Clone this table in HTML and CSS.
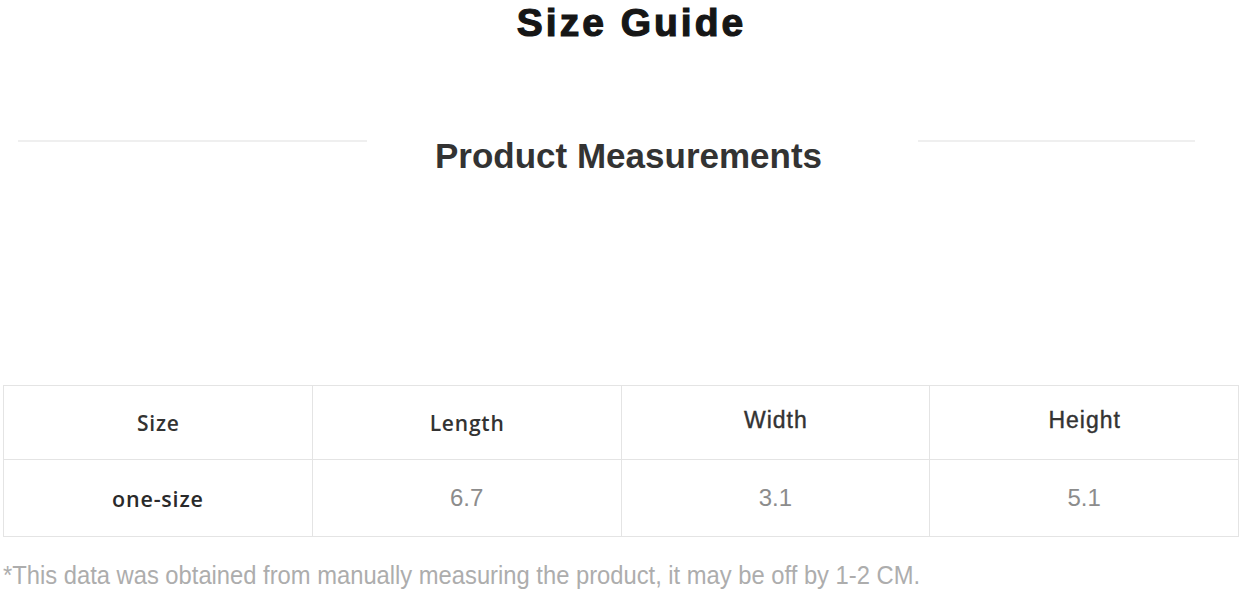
FILE: index.html
```html
<!DOCTYPE html>
<html lang="en">
<head>
<meta charset="utf-8">
<title>Size Guide</title>
<link rel="stylesheet" href="styles.css">
</head>
<body>
<main class="page">
  <h1 class="title">Size Guide</h1>
  <div class="section-head">
    <span class="rule rule-left"></span>
    <h2 class="section-title">Product Measurements</h2>
    <span class="rule rule-right"></span>
  </div>
  <table class="size-table">
    <thead>
      <tr>
        <th>Size</th>
        <th>Length</th>
        <th class="arial">Width</th>
        <th class="arial">Height</th>
      </tr>
    </thead>
    <tbody>
      <tr>
        <td class="size-name">one-size</td>
        <td class="val">6.7</td>
        <td class="val">3.1</td>
        <td class="val">5.1</td>
      </tr>
    </tbody>
  </table>
  <p class="note"><span class="note-text">*This data was obtained from manually measuring the product, it may be off by 1-2 CM.</span></p>
</main>
</body>
</html>
```

FILE: styles.css
```css
html, body {
  margin: 0;
  padding: 0;
  background: #ffffff;
}

.page {
  width: 1242px;
  height: 592px;
  overflow: hidden;
  font-family: "Liberation Sans", Arial, sans-serif;
}

.title {
  margin: 0;
  text-align: center;
  font-size: 39px;
  line-height: 45px;
  font-weight: 700;
  color: #161616;
  letter-spacing: 3px;
  -webkit-text-stroke: 1.2px #161616;
  padding-left: 21px;
}

.section-head {
  display: flex;
  align-items: flex-start;
  margin-top: 91px;
  padding-left: 18px;
}

.rule {
  display: block;
  height: 2px;
  background: #efefef;
  margin-top: 4px;
}

.rule-left {
  width: 349px;
  margin-right: 68px;
}

.rule-right {
  width: 277px;
  margin-left: 100px;
}

.section-title {
  margin: 0;
  width: 383px;
  white-space: nowrap;
  font-size: 35px;
  line-height: 40px;
  font-weight: 700;
  color: #333333;
}

.size-table {
  margin: 209px 0 0 3px;
  width: 1236px;
  border-collapse: collapse;
  table-layout: fixed;
}

.size-table th,
.size-table td {
  border: 1px solid #e4e4e4;
  text-align: center;
  vertical-align: middle;
  padding: 0;
}

.size-table th {
  height: 73px;
  font-family: "Open Sans", "Liberation Sans", sans-serif;
  font-weight: 600;
  font-size: 21px;
  color: #333333;
  letter-spacing: 0.8px;
  padding-left: 1px;
}

.size-table th.arial {
  height: 69px;
  font-family: "Liberation Sans", Arial, sans-serif;
  font-size: 23px;
  font-weight: 400;
  -webkit-text-stroke: 0.4px #333333;
  letter-spacing: 1px;
  padding-bottom: 4px;
}

.size-table td {
  height: 76px;
}

.size-name {
  font-family: "Open Sans", "Liberation Sans", sans-serif;
  font-weight: 600;
  font-size: 21.5px;
  color: #2a2a2a;
  letter-spacing: 0.8px;
}

.val {
  font-size: 24px;
  color: #8c8c8c;
}

.note {
  margin: 24px 0 0 3px;
  font-size: 25px;
  line-height: 28px;
  color: #adadad;
  white-space: nowrap;
}

.note-text {
  display: inline-block;
  transform-origin: left center;
  transform: scaleX(0.95);
}
```
